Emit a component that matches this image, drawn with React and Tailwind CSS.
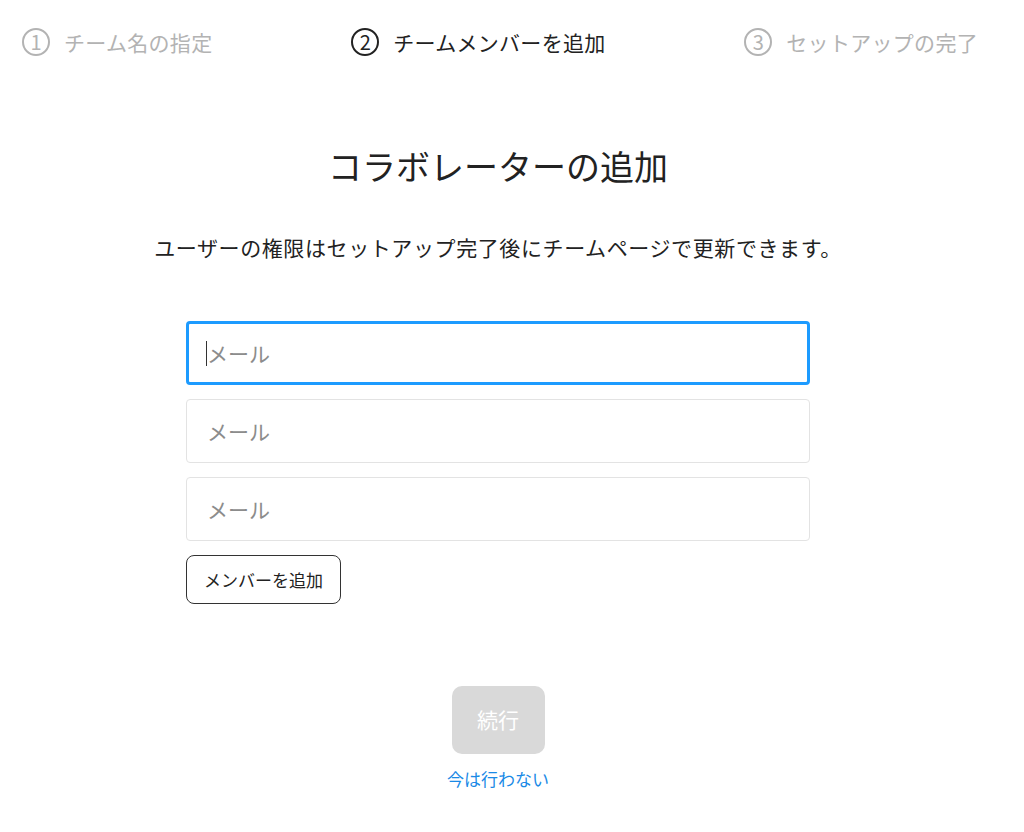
import { useState } from "react";

const font = { fontFamily: '"Noto Sans CJK JP", "Noto Sans", sans-serif' };

function Step({ n, label, active }) {
  const color = active ? "text-[#222222] border-[#222222]" : "text-[#b3b3b3] border-[#b3b3b3]";
  return (
    <div className={`flex items-center gap-[14px] ${color}`}>
      <span className="flex h-[28px] w-[28px] items-center justify-center rounded-full border-2 border-current text-[20px] leading-none">
        {n}
      </span>
      <span className="text-[21px] leading-[28px] tracking-[0.3px]">{label}</span>
    </div>
  );
}

export default function App() {
  const [emails, setEmails] = useState(["", "", ""]);

  function setEmail(i, v) {
    const next = [...emails];
    next[i] = v;
    setEmails(next);
  }

  return (
    <div className="min-h-[832px] bg-white" style={font}>
      <div className="flex w-[996px] flex-col items-center">
        <div className="flex w-full items-center justify-between pl-[22px] pr-[18px] pt-[28px]">
          <Step n="1" label="チーム名の指定" />
          <Step n="2" label="チームメンバーを追加" active />
          <Step n="3" label="セットアップの完了" />
        </div>

        <h1 className="mt-[89px] text-[34px] font-normal leading-[41px] text-[#222222]">
          コラボレーターの追加
        </h1>
        <p className="mt-[46px] text-[21px] leading-[30px] tracking-[0.6px] text-[#222222]">
          ユーザーの権限はセットアップ完了後にチームページで更新できます。
        </p>

        <div className="mt-[59px] flex w-[624px] flex-col gap-[14px]">
          {emails.map((v, i) => (
            <div key={i} className="relative">
              <input
                value={v}
                onChange={(e) => setEmail(i, e.target.value)}
                placeholder="メール"
                className={
                  i === 0
                    ? "h-[64px] w-full rounded-[4px] border-[3px] border-[#1d9bff] px-[18px] text-[21px] text-[#222] outline-none placeholder:text-[#8c8c8c]"
                    : "h-[64px] w-full rounded-[4px] border border-[#e3e3e3] px-[20px] text-[21px] text-[#222] outline-none placeholder:text-[#8c8c8c]"
                }
              />
              {i === 0 && v === "" && (
                <span className="pointer-events-none absolute left-[20px] top-[20px] h-[25px] w-px bg-[#333]" />
              )}
            </div>
          ))}
          <div>
            <button className="h-[49px] w-[155px] rounded-[8px] border border-[#333333] text-[17px] text-[#222222]">
              メンバーを追加
            </button>
          </div>
        </div>

        <button
          disabled
          className="mt-[82px] h-[68px] w-[93px] rounded-[10px] bg-[#d9d9d9] text-[21px] text-white"
        >
          続行
        </button>
        <a href="#" className="mt-[13px] text-[17px] leading-[24px] text-[#1a8ae6]">
          今は行わない
        </a>
      </div>
    </div>
  );
}
